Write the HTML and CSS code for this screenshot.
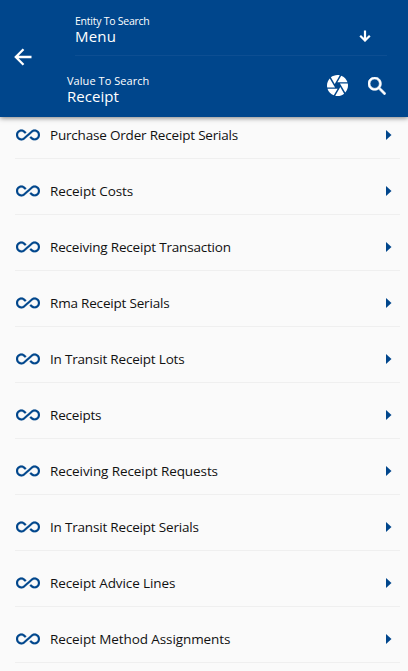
FILE: index.html
```html
<!DOCTYPE html>
<html lang="en">
<head>
<meta charset="utf-8">
<title>Menu search</title>
<link rel="stylesheet" href="styles.css">
</head>
<body>
<svg width="0" height="0" class="defs">
  <symbol id="inf" viewBox="0 0 24 24"><path d="M18.6 6.62c-1.44 0-2.8.56-3.77 1.53L12 10.66 10.48 12h.01L7.8 14.39c-.64.64-1.49.99-2.4.99-1.87 0-3.39-1.51-3.39-3.38S3.53 8.62 5.4 8.62c.91 0 1.76.35 2.44 1.03l1.13 1 1.51-1.34L9.22 8.2C8.2 7.18 6.84 6.62 5.4 6.62 2.42 6.62 0 9.04 0 12s2.42 5.38 5.4 5.38c1.44 0 2.8-.56 3.77-1.53l2.83-2.5.01.01L13.52 12h-.01l2.69-2.39c.64-.64 1.49-.99 2.4-.99 1.87 0 3.39 1.51 3.39 3.38s-1.52 3.38-3.39 3.38c-.9 0-1.76-.35-2.44-1.03l-1.14-1.01-1.51 1.34 1.27 1.12c1.02 1.01 2.37 1.57 3.82 1.57 2.98 0 5.4-2.41 5.4-5.38s-2.42-5.37-5.4-5.37z"/></symbol>
  <symbol id="tri" viewBox="0 0 6 10"><path d="M0 0l5.5 5L0 10z"/></symbol>
</svg>
<header class="bar">
  <svg class="back" viewBox="0 0 18 18"><path d="M17.5 9H2M9.5 1.3L1.8 9l7.7 7.7"/></svg>
  <div class="fields">
    <div class="field entity">
      <div class="texts"><div class="label">Entity To Search</div><div class="value">Menu</div></div>
      <svg class="down" viewBox="0 0 12 12"><path d="M6 .5v10M1.2 5.7L6 10.5l4.8-4.8"/></svg>
    </div>
    <div class="field query">
      <div class="texts"><div class="label">Value To Search</div><div class="value">Receipt</div></div>
      <svg class="camera" viewBox="2 2 20 20"><path d="M9.4 10.5l4.77-8.26C13.47 2.09 12.75 2 12 2c-2.4 0-4.6.85-6.32 2.25l3.66 6.35.06-.1zM21.54 9c-.92-2.92-3.15-5.26-6-6.34L11.88 9h9.66zm.26 1h-7.49l.29.5 4.76 8.25C21 16.97 22 14.61 22 12c0-.69-.07-1.35-.2-2zM8.54 12l-3.9-6.75C3.01 7.03 2 9.39 2 12c0 .69.07 1.35.2 2h7.49l-1.15-2zm-6.08 3c.92 2.92 3.15 5.26 6 6.34L12.12 15H2.46zm11.27 0l-3.9 6.76c.7.15 1.42.24 2.17.24 2.4 0 4.6-.85 6.32-2.25l-3.66-6.35-.93 1.6z"/></svg>
      <svg class="search" viewBox="3 3 17.5 17.5"><path d="M15.5 14h-.79l-.28-.27C15.41 12.59 16 11.11 16 9.5 16 5.91 13.09 3 9.5 3S3 5.91 3 9.5 5.91 16 9.5 16c1.61 0 3.09-.59 4.23-1.57l.27.28v.79l5 4.99L20.49 19l-4.99-5zm-6 0C7.01 14 5 11.99 5 9.5S7.01 5 9.5 5 14 7.01 14 9.5 11.99 14 9.5 14z"/></svg>
    </div>
  </div>
</header>
<ul class="list">
  <li><svg class="inf"><use href="#inf"/></svg><span class="tight">Purchase Order Receipt Serials</span><svg class="tri"><use href="#tri"/></svg></li>
  <li><svg class="inf"><use href="#inf"/></svg><span>Receipt Costs</span><svg class="tri"><use href="#tri"/></svg></li>
  <li><svg class="inf"><use href="#inf"/></svg><span class="tight">Receiving Receipt Transaction</span><svg class="tri"><use href="#tri"/></svg></li>
  <li><svg class="inf"><use href="#inf"/></svg><span class="tight">Rma Receipt Serials</span><svg class="tri"><use href="#tri"/></svg></li>
  <li><svg class="inf"><use href="#inf"/></svg><span class="tight">In Transit Receipt Lots</span><svg class="tri"><use href="#tri"/></svg></li>
  <li><svg class="inf"><use href="#inf"/></svg><span class="tight">Receipts</span><svg class="tri"><use href="#tri"/></svg></li>
  <li><svg class="inf"><use href="#inf"/></svg><span>Receiving Receipt Requests</span><svg class="tri"><use href="#tri"/></svg></li>
  <li><svg class="inf"><use href="#inf"/></svg><span class="tight">In Transit Receipt Serials</span><svg class="tri"><use href="#tri"/></svg></li>
  <li><svg class="inf"><use href="#inf"/></svg><span>Receipt Advice Lines</span><svg class="tri"><use href="#tri"/></svg></li>
  <li><svg class="inf"><use href="#inf"/></svg><span>Receipt Method Assignments</span><svg class="tri"><use href="#tri"/></svg></li>
</ul>
</body>
</html>
```
FILE: styles.css
```css
* { box-sizing: border-box; }
body {
  margin: 0;
  height: 671px;
  overflow: hidden;
  background: #fafafa;
  color: #111;
  font-family: "Open Sans", "Noto Sans", sans-serif;
}
.defs { display: block; height: 0; }
svg { flex: none; }
.bar {
  position: relative;
  z-index: 1;
  display: flex;
  align-items: center;
  height: 117px;
  padding-left: 14px;
  background: #00468c;
  color: #fff;
  box-shadow: 0 1px 5px rgba(0, 0, 0, .5);
}
.back { width: 18px; height: 18px; fill: none; stroke: #fff; stroke-width: 2.3; margin-top: -3px; }
.fields { flex: 1; align-self: stretch; padding-left: 35px; }
.field { display: flex; }
.entity { height: 56px; margin-left: 8px; margin-right: 21px; padding-top: 14px; border-bottom: 1px solid #0d4e92; }
.query { height: 61px; padding-top: 18px; }
.texts { flex: 1; }
.label { font-size: 11px; line-height: 14px; letter-spacing: .05px; }
.entity .label { font-size: 10.5px; letter-spacing: -.25px; }
.value { font-size: 15px; line-height: 17px; }
.entity .value { letter-spacing: .2px; }
.query .value { letter-spacing: .05px; }
.down { width: 12px; height: 12px; margin: 16px 16px 0 0; fill: none; stroke: #fff; stroke-width: 2.2; }
.camera { width: 21px; height: 21px; margin: 1px 20px 0 0; fill: #fff; }
.search { width: 18px; height: 18px; margin: 3px 22px 0 0; fill: #fff; stroke: #fff; stroke-width: .6; }
.list { list-style: none; margin: -14px 8px 0 15px; padding: 0; }
.list li {
  display: flex;
  align-items: center;
  height: 56px;
  padding: 9px 8px 0 1px;
  border-bottom: 1px solid #efefef;
}
.list span { flex: 1; margin-left: 10px; font-size: 13.5px; line-height: 20px; letter-spacing: -.09px; }
.list .tight { letter-spacing: -.19px; }
.inf { width: 24px; height: 24px; fill: #00468c; stroke: #00468c; stroke-width: .2; }
.tri { width: 6px; height: 10px; fill: #00468c; }
```
